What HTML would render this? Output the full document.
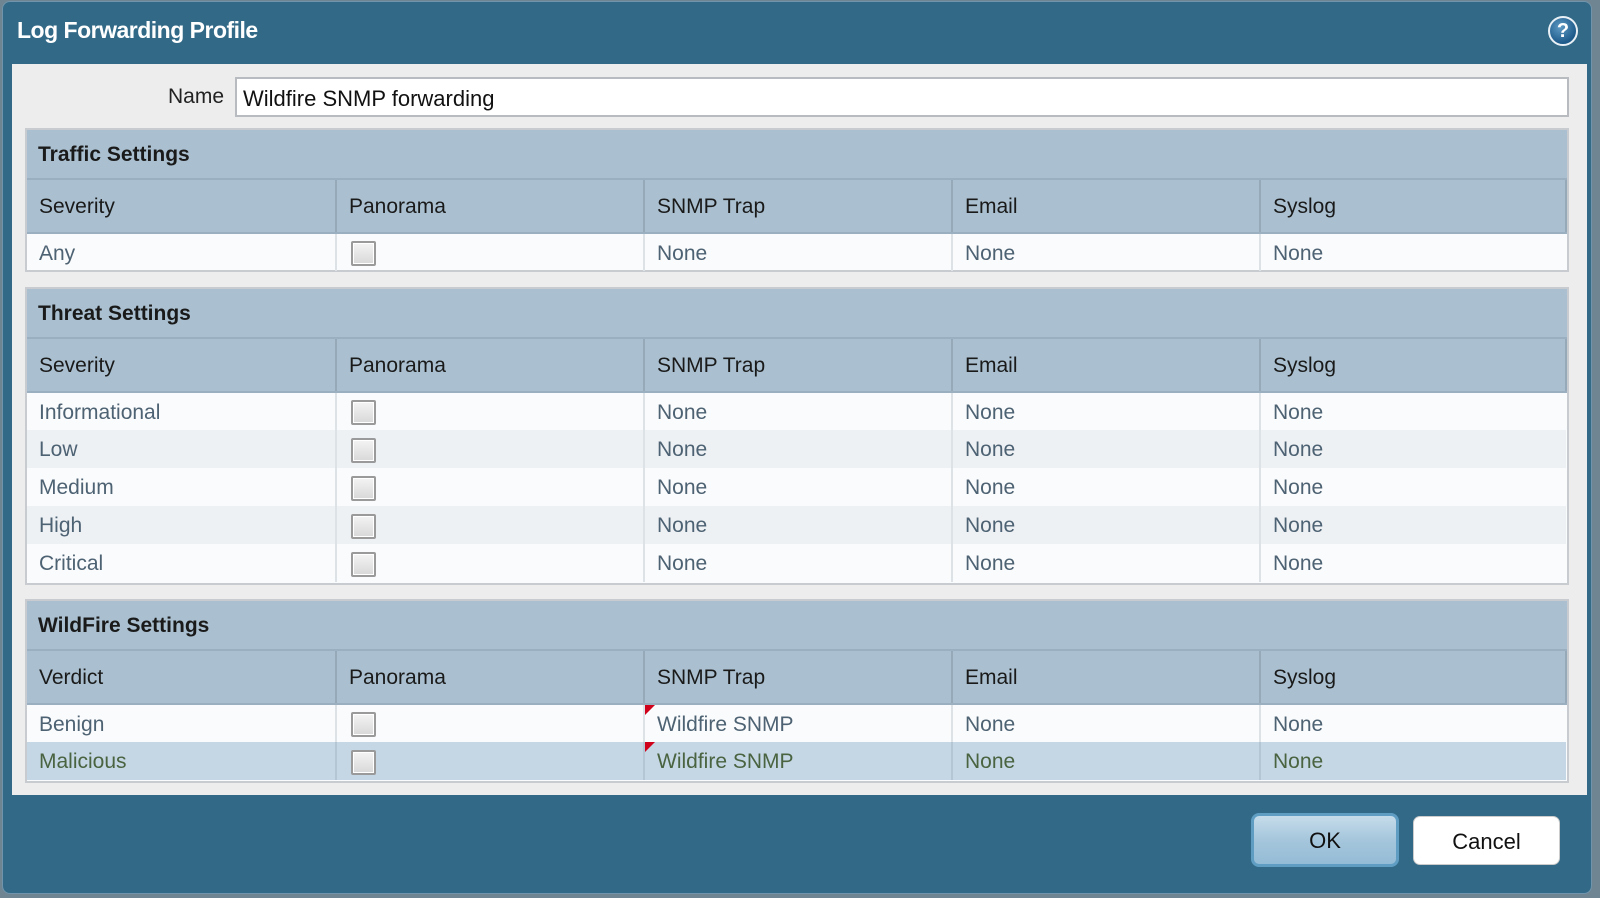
<!DOCTYPE html>
<html><head><meta charset="utf-8"><style>
*{margin:0;padding:0;box-sizing:border-box}
body{width:1600px;height:898px;background:#6f8592;font-family:"Liberation Sans",sans-serif;position:relative;overflow:hidden}
.dlg{position:absolute;left:2px;top:1px;width:1590px;height:893px;background:#316987;border-radius:8px;border:1px solid #6f94ab}
.title{position:absolute;left:17px;top:17px;color:#fff;font-weight:bold;font-size:23px;letter-spacing:-0.5px}
.help{position:absolute;left:1548px;top:16px;width:30px;height:30px;border-radius:50%;background:radial-gradient(circle at 40% 35%,#5f9ac4,#1d5a8a 70%);border:2px solid #e8f0f6;color:#fff;font-weight:bold;font-size:20px;text-align:center;line-height:26px}
.panel{position:absolute;left:12px;top:64px;width:1575px;height:731px;background:#ededee}
.lbl{position:absolute;left:168px;top:85px;font-size:21px;color:#222}
.inp{position:absolute;left:235px;top:77px;width:1334px;height:40px;background:#fff;border:2px solid #b8bcc0;font-size:22px;color:#111;padding:7px 6px}
.sec{position:absolute;left:25px;width:1544px;border:2px solid #c8ccd0;background:#fafbfc}
.sh{height:50px;background:#aac0d0;font-weight:bold;font-size:21px;color:#1a1a1a;padding:13px 11px;border-bottom:2px solid #9ab0c0}
table{border-collapse:collapse;width:100%;table-layout:fixed}
td{font-size:21px;padding:2px 12px 0;border-right:2px solid #dde2e6;color:#4d6273;white-space:nowrap;position:relative}
td:last-child{border-right:none}
tr.h td{background:#aac0d0;color:#1a1a1a;height:53px;border-right:2px solid #95a9b8;border-bottom:2px solid #9ab0c0}
tr.r td{height:38px}
tr.a td{background:#eef1f4}
tr.s td{background:#c5d7e5;color:#4a6340;border-right-color:#b4c6d3}
.cb{display:inline-block;width:25px;height:25px;border:2px solid #9a9a9a;border-radius:2px;background:linear-gradient(#f4f4f4,#d8d8d8);vertical-align:middle;margin-left:2px;box-shadow:inset 0 0 0 1px #fff}
.tri{position:absolute;left:0;top:0;width:0;height:0;border-top:10px solid #d0021b;border-right:10px solid transparent}
.btn{position:absolute;font-size:22px;text-align:center;color:#111}
</style></head><body>
<div class="dlg"></div>
<div class="title">Log Forwarding Profile</div>
<div class="help">?</div>
<div class="panel"></div>
<div class="lbl">Name</div>
<div class="inp">Wildfire SNMP forwarding</div>

<div class="sec" style="top:128px;height:144px">
<div class="sh">Traffic Settings</div>
<table><colgroup><col style="width:309px"><col style="width:308px"><col style="width:308px"><col style="width:308px"><col></colgroup>
<tr class="h"><td>Severity</td><td>Panorama</td><td>SNMP Trap</td><td>Email</td><td>Syslog</td></tr>
<tr class="r"><td>Any</td><td><span class="cb"></span></td><td>None</td><td>None</td><td>None</td></tr>
</table></div>

<div class="sec" style="top:287px;height:298px">
<div class="sh">Threat Settings</div>
<table><colgroup><col style="width:309px"><col style="width:308px"><col style="width:308px"><col style="width:308px"><col></colgroup>
<tr class="h"><td>Severity</td><td>Panorama</td><td>SNMP Trap</td><td>Email</td><td>Syslog</td></tr>
<tr class="r"><td>Informational</td><td><span class="cb"></span></td><td>None</td><td>None</td><td>None</td></tr>
<tr class="r a"><td>Low</td><td><span class="cb"></span></td><td>None</td><td>None</td><td>None</td></tr>
<tr class="r"><td>Medium</td><td><span class="cb"></span></td><td>None</td><td>None</td><td>None</td></tr>
<tr class="r a"><td>High</td><td><span class="cb"></span></td><td>None</td><td>None</td><td>None</td></tr>
<tr class="r"><td>Critical</td><td><span class="cb"></span></td><td>None</td><td>None</td><td>None</td></tr>
</table></div>

<div class="sec" style="top:599px;height:184px">
<div class="sh">WildFire Settings</div>
<table><colgroup><col style="width:309px"><col style="width:308px"><col style="width:308px"><col style="width:308px"><col></colgroup>
<tr class="h"><td>Verdict</td><td>Panorama</td><td>SNMP Trap</td><td>Email</td><td>Syslog</td></tr>
<tr class="r"><td>Benign</td><td><span class="cb"></span></td><td><span class="tri"></span>Wildfire SNMP</td><td>None</td><td>None</td></tr>
<tr class="r s"><td>Malicious</td><td><span class="cb"></span></td><td><span class="tri"></span>Wildfire SNMP</td><td>None</td><td>None</td></tr>
</table></div>

<div class="btn" style="left:1251px;top:813px;width:148px;height:54px;border-radius:8px;border:3px solid #5f9dc2;background:linear-gradient(#c6dcea,#a5c6dc 50%,#95bcd6);line-height:50px">OK</div>
<div class="btn" style="left:1413px;top:816px;width:147px;height:49px;border-radius:7px;background:#fff;border:1px solid #ccc;line-height:49px">Cancel</div>
</body></html>
